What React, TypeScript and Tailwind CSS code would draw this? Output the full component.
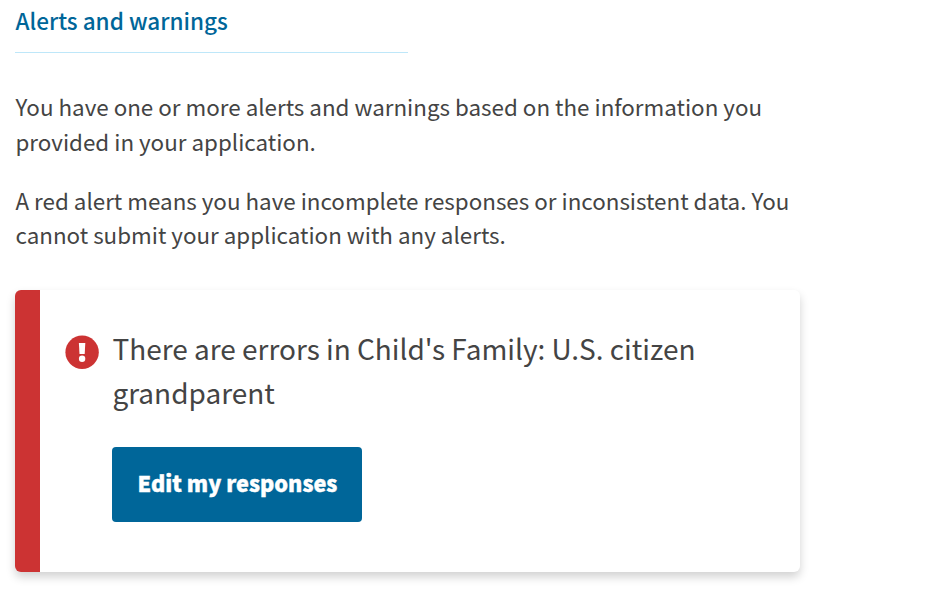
const fontStack = 'font-["Noto_Sans_CJK_SC","Noto_Sans",sans-serif]';

function AlertIcon() {
  return (
    <svg viewBox="0 0 34 34" className="mt-[45px] h-[34px] w-[34px] shrink-0" aria-hidden="true">
      <circle cx="17.1" cy="17.2" r="16.7" fill="#cc3333" />
      <path d="M13.9 8.1h6.4l-.6 11h-5.2z" fill="#fff" />
      <circle cx="17.1" cy="23.8" r="3.2" fill="#fff" />
    </svg>
  );
}

export default function App() {
  return (
    <main className={`h-[595px] overflow-hidden bg-white pl-[15px] text-[#444444] ${fontStack}`}>
      <h2 className="h-[53px] w-[393px] border-b border-[#bee7f9] pt-[3px] pl-[0.5px] text-[22.5px] leading-[35px] font-medium text-[#006699]">
        Alerts and warnings
      </h2>

      <div className="h-[201px] pt-[36px] pl-[0.5px] text-[22.38px] whitespace-nowrap">
        <p className="leading-[35px]">
          You have one or more alerts and warnings based on the information you
          <br />
          provided in your application.
        </p>
        <p className="mt-[23.8px] leading-[34.4px]">
          A red alert means you have incomplete responses or inconsistent data. You
          <br />
          cannot submit your application with any alerts.
        </p>
      </div>

      <section className="mt-[36px] flex h-[282px] w-[785px] rounded-md border-l-[25px] border-[#cc3333] bg-white pl-[25px] shadow-[0_5px_10px_rgba(0,0,0,0.18)]">
        <AlertIcon />
        <div className="ml-[13px] pt-[36px]">
          <h3 className="pl-[0.5px] text-[27.97px] leading-[44px] font-normal whitespace-nowrap">
            There are errors in Child's Family: U.S. citizen
            <br />
            grandparent
          </h3>
          <button className="mt-[33px] flex h-[75px] w-[250px] items-center justify-center rounded bg-[#006699] pb-[2px] pl-[1px] text-[21.7px] font-black whitespace-nowrap text-white [-webkit-text-stroke:0.4px_white]">
            Edit my responses
          </button>
        </div>
      </section>
    </main>
  );
}
